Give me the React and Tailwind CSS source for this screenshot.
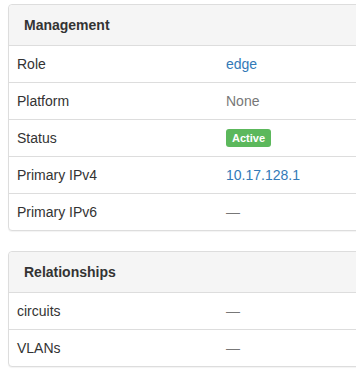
import React from 'react';

const Panel = ({ title, rows }) => (
  <div className="mb-5 w-[420px] rounded border border-[#dddddd] bg-white shadow-[0_1px_1px_rgba(0,0,0,0.05)]">
    <div className="rounded-t border-b border-[#dddddd] bg-[#f5f5f5] px-[15px] py-[10px] text-[14px] leading-5 font-bold text-[#333333]">
      {title}
    </div>
    <table className="w-full border-collapse">
      <tbody>
        {rows.map((row, i) => (
          <tr key={row.label} className={i > 0 ? 'border-t border-[#dddddd]' : ''}>
            <td className="w-[209px] p-2 text-[14px] leading-5 text-[#333333]">{row.label}</td>
            <td className="p-2 text-[14px] leading-5">{row.value}</td>
          </tr>
        ))}
      </tbody>
    </table>
  </div>
);

const Muted = ({ children }) => <span className="text-[#777777]">{children}</span>;
const Link = ({ children }) => <a href="#" className="text-[#337ab7]">{children}</a>;

const App = () => {
  const management = [
    { label: 'Role', value: <Link>edge</Link> },
    { label: 'Platform', value: <Muted>None</Muted> },
    {
      label: 'Status',
      value: (
        <span className="inline-block rounded-[3px] bg-[#5cb85c] px-[6px] pt-[3px] pb-[3px] align-[1px] text-[11px] leading-[12px] font-bold text-white">
          Active
        </span>
      )
    },
    { label: 'Primary IPv4', value: <Link>10.17.128.1</Link> },
    { label: 'Primary IPv6', value: <Muted>&mdash;</Muted> }
  ];

  const relationships = [
    { label: 'circuits', value: <Muted>&mdash;</Muted> },
    { label: 'VLANs', value: <Muted>&mdash;</Muted> }
  ];

  return (
    <div className="h-[377px] w-[356px] overflow-hidden bg-white pt-1 pl-2 font-['Liberation_Sans',Arial,sans-serif]">
      <Panel title="Management" rows={management} />
      <Panel title="Relationships" rows={relationships} />
    </div>
  );
};

export default App;
